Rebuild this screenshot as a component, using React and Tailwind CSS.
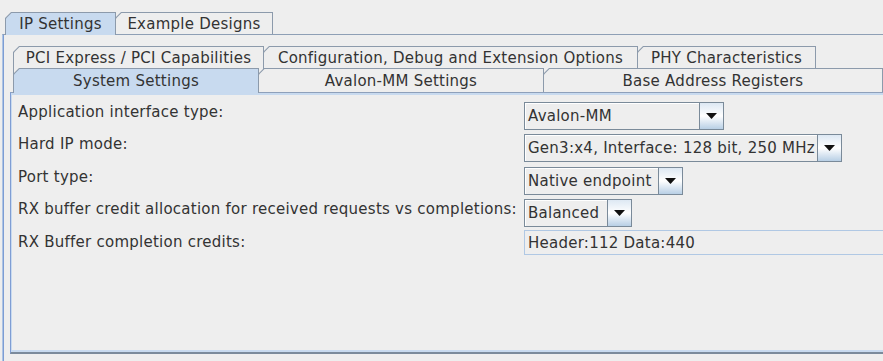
import React from 'react';

// Swing / Metal-Ocean style tab with a clipped top-left corner
function Tab({ label, className = '', selected = false, textClass = 'items-center' }) {
  return (
    <div
      className={`shrink-0 px-[1px] pt-[1px] [clip-path:polygon(6px_0,100%_0,100%_100%,0_100%,0_6px)] bg-[#8c9aab] ${className}`}
    >
      <div
        className={`h-full flex justify-center whitespace-nowrap [clip-path:polygon(5.5px_0,100%_0,100%_100%,0_100%,0_5.5px)] ${textClass} ${
          selected ? 'bg-[#c8daef]' : 'bg-[#eeeeee]'
        }`}
      >
        <span className="leading-[18px]">{label}</span>
      </div>
    </div>
  );
}

function Combo({ value, w }) {
  return (
    <div className={`flex h-[28px] border border-[#7a8a99] ${w}`}>
      <div className="flex-1 flex items-center pl-[3px] bg-[#eeeeee] shadow-[inset_1px_1px_0_#ffffff] whitespace-nowrap leading-[18px] overflow-hidden">
        {value}
      </div>
      <div className="w-[24px] shrink-0 border-l border-[#7a8a99] bg-gradient-to-b from-[#dde8f3] via-[#ffffff] to-[#b8cfe5] flex items-center justify-center">
        <svg width="11" height="6" viewBox="0 0 11 6">
          <path d="M0 0h11L5.5 6z" fill="#111" />
        </svg>
      </div>
    </div>
  );
}

function Row({ label, className = '', labelClass = 'pt-[1px]', children }) {
  return (
    <div className={`flex ${className}`}>
      <div className={`w-[506px] shrink-0 leading-[18px] whitespace-nowrap ${labelClass}`}>{label}</div>
      {children}
    </div>
  );
}

export default function App() {
  return (
    <div className="w-[883px] h-[361px] overflow-hidden bg-[#eeeeee] flex flex-col font-['DejaVu_Sans',sans-serif] text-[15px] tracking-[0.25px] text-[#333333]">
      {/* outer tab strip */}
      <div className="h-[34px] shrink-0 flex items-end pl-[5px]">
        <Tab label="IP Settings" selected className="relative z-10 w-[111px] h-[23px] mb-[-1px]" />
        <Tab label="Example Designs" className="w-[158px] h-[22px] ml-[-1px]" />
      </div>

      {/* outer panel */}
      <div className="flex-1 flex flex-col ml-[2px] border-t border-l border-t-[#8e9fb5] border-l-[#adc4e4] shadow-[inset_1px_0_0_#7d9dd4] pl-[7px] pt-[11px] pb-[7px]">
        {/* back tab row */}
        <div className="flex pl-[3px] h-[28px] shrink-0">
          <Tab label="PCI Express / PCI Capabilities" className="w-[251px] h-[28px]" textClass="items-start pt-[2px]" />
          <Tab label="Configuration, Debug and Extension Options" className="w-[375px] h-[28px] ml-[-1px]" textClass="items-start pt-[2px]" />
          <Tab label="PHY Characteristics" className="w-[179px] h-[28px] ml-[-1px]" textClass="items-start pt-[2px]" />
        </div>

        {/* front tab row */}
        <div className="flex items-end pl-[3px] h-[24px] mt-[-6px] shrink-0 relative z-10">
          <Tab label="System Settings" selected className="w-[246px] h-[25px] mb-[-1px]" />
          <Tab label="Avalon-MM Settings" className="w-[286px] h-[24px] ml-[-1px]" />
          <Tab label="Base Address Registers" className="flex-1 h-[24px] ml-[-1px]" />
        </div>

        {/* content panel */}
        <div className="flex-1 flex flex-col border-t border-l border-b-2 border-t-[#8ea0ba] border-l-[#7f9dd3] border-b-[#7b8a9b] shadow-[inset_1px_2px_0_#c8daef,inset_0_-2px_0_#c8daef] pt-[9px] pl-[7px]">
          <Row label="Application interface type:">
            <Combo value="Avalon-MM" w="w-[200px]" />
          </Row>
          <Row label="Hard IP mode:" className="mt-[4px]">
            <Combo value="Gen3:x4, Interface: 128 bit, 250 MHz" w="w-[318px]" />
          </Row>
          <Row label="Port type:" className="mt-[5px]">
            <Combo value="Native endpoint" w="w-[159px]" />
          </Row>
          <Row label="RX buffer credit allocation for received requests vs completions:" className="mt-[4px]">
            <Combo value="Balanced" w="w-[108px]" />
          </Row>
          <Row label="RX Buffer completion credits:" className="mt-[3px]" labelClass="pt-[3px]">
            <div className="flex-1 h-[25px] border border-r-0 border-[#b0c8e4] bg-[#eeeeee] pl-[3px] flex items-center leading-[18px] whitespace-nowrap">
              Header:112 Data:440
            </div>
          </Row>
        </div>
      </div>
    </div>
  );
}
